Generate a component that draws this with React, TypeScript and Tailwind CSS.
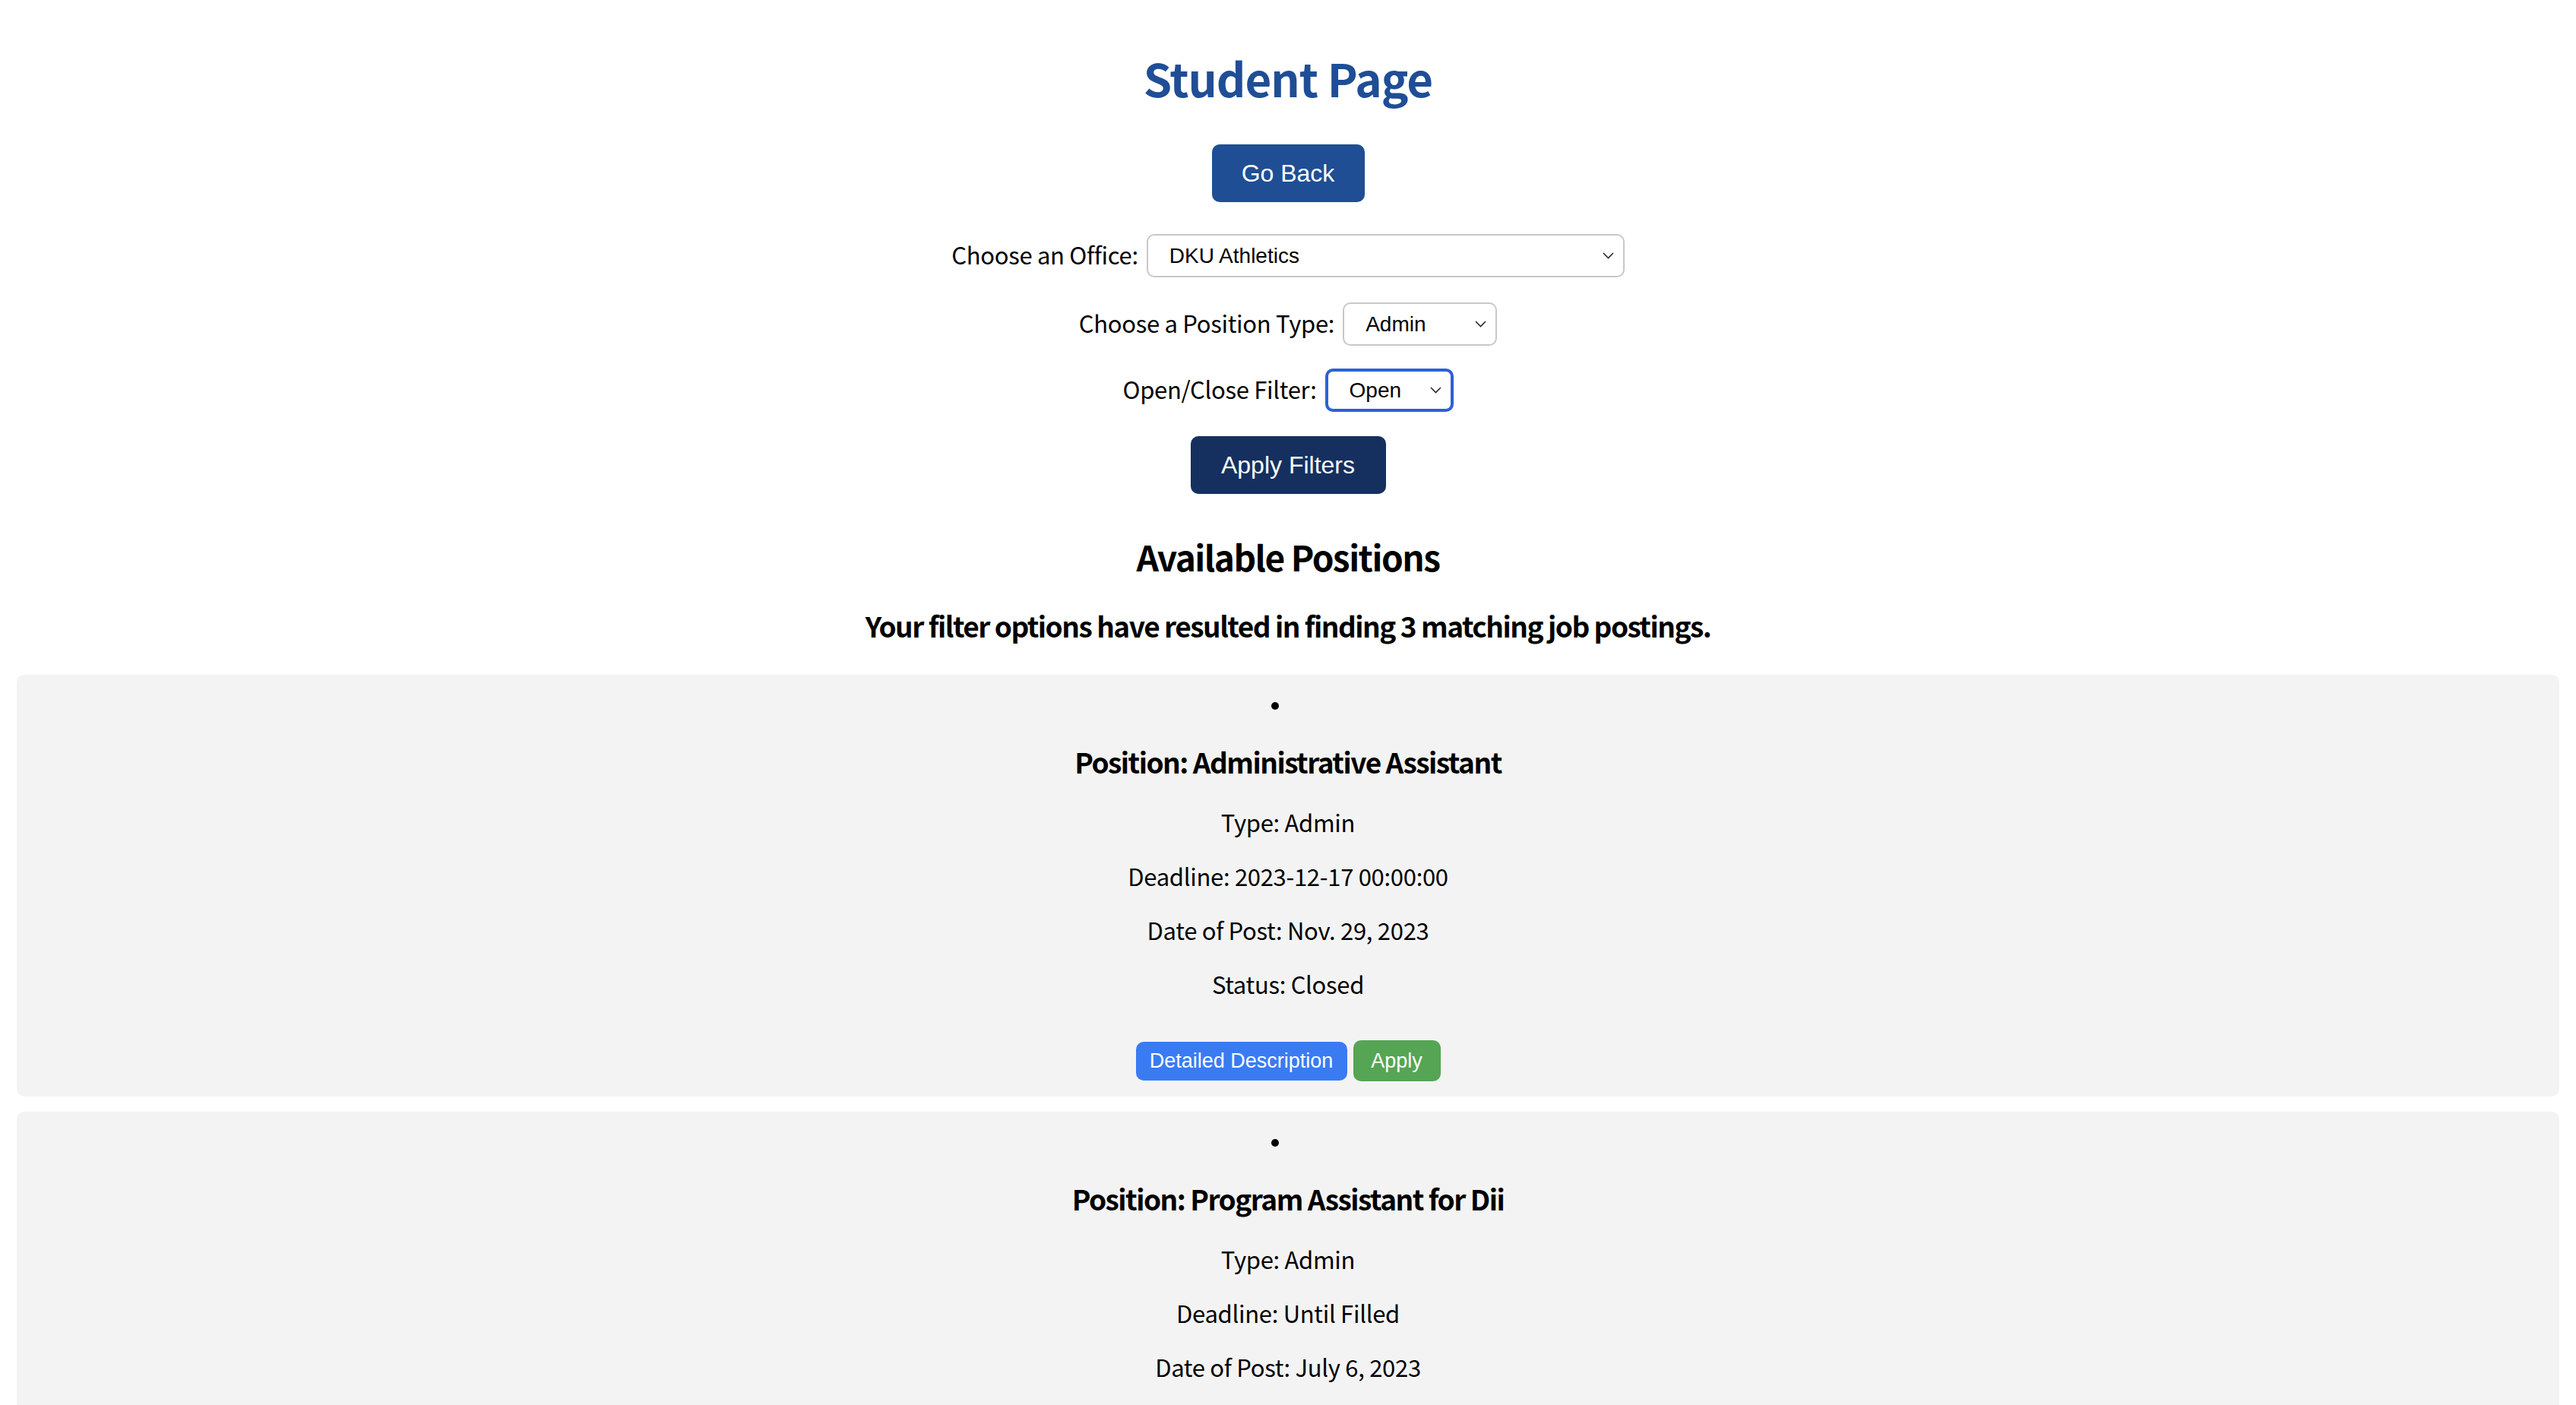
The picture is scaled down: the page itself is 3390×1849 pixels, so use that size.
import React from "react";

type Job = {
  title: string;
  type: string;
  deadline: string;
  posted: string;
  status: string;
};

const jobs: Job[] = [
  {
    title: "Administrative Assistant",
    type: "Admin",
    deadline: "2023-12-17 00:00:00",
    posted: "Nov. 29, 2023",
    status: "Closed",
  },
  {
    title: "Program Assistant for Dii",
    type: "Admin",
    deadline: "Until Filled",
    posted: "July 6, 2023",
    status: "Open",
  },
  {
    title: "Office Assistant",
    type: "Admin",
    deadline: "Until Filled",
    posted: "Sept. 12, 2023",
    status: "Open",
  },
];

const Chevron = () => (
  <svg width="15" height="9" viewBox="0 0 15 9" fill="none">
    <polyline points="1,1 7.5,7.5 14,1" stroke="#2b2b2b" strokeWidth="1.6" />
  </svg>
);

// fake select box, styled like the mac default
const SelectBox = ({
  value,
  width,
  focused,
}: {
  value: string;
  width: string;
  focused?: boolean;
}) => (
  <div
    className={`${width} h-[57px] flex items-center justify-between pl-[28px] pr-[12px] rounded-[10px] bg-white font-['Liberation_Sans',Arial,sans-serif] text-[28px] ${
      focused ? "border-[4px] border-[#2c61d6]" : "border-2 border-[#c8c8c8]"
    }`}
  >
    <span>{value}</span>
    <Chevron />
  </div>
);

const FilterRow = ({ label, children, top }: { label: string; children: React.ReactNode; top: string }) => (
  <div className={`flex items-center gap-[11px] ${top}`}>
    <label className="pb-[4px] text-[31px] leading-[44px] tracking-[-0.3px]">{label}</label>
    {children}
  </div>
);

const Line = ({ children, top }: { children: React.ReactNode; top: string }) => (
  <p className={`${top} text-[31px] leading-[44px] tracking-[-0.3px]`}>{children}</p>
);

const JobCard = ({ job }: { job: Job }) => (
  <li className="list-none mx-[22px] mb-[20px] pt-[21px] pb-[20px] bg-[#f3f3f3] rounded-[10px] flex flex-col items-center text-center">
    <div className="h-[40px] flex items-center">
      <span className="mr-[34px] w-[10px] h-[10px] rounded-full bg-black" />
    </div>
    <h3 className="mt-[28px] text-[37px] leading-[50px] font-bold tracking-[-1.5px]">Position: {job.title}</h3>
    <Line top="mt-[33px]">Type: {job.type}</Line>
    <Line top="mt-[27px]">Deadline: {job.deadline}</Line>
    <Line top="mt-[27px]">Date of Post: {job.posted}</Line>
    <Line top="mt-[27px]">Status: {job.status}</Line>
    <div className="mt-[52px] flex items-center gap-[8px] font-['Liberation_Sans',Arial,sans-serif] text-[27px] text-white">
      <button type="button" className="h-[51px] w-[278px] rounded-[10px] bg-[#3a7bf2]">
        Detailed Description
      </button>
      <button type="button" className="h-[54px] w-[115px] rounded-[10px] bg-[#55a555]">
        Apply
      </button>
    </div>
  </li>
);

export default function App() {
  return (
    <main className="min-h-screen bg-white text-black font-['Noto_Sans_CJK_KR',sans-serif]">
      <div className="flex flex-col items-center pt-[62px]">
        <h1 className="text-[60px] leading-[80px] font-bold tracking-[-1px] text-[#1f4e96]">Student Page</h1>
        <button
          type="button"
          className="mt-[48px] h-[76px] w-[201px] rounded-[10px] bg-[#1f4e94] text-white text-[32px] font-['Liberation_Sans',Arial,sans-serif]"
        >
          Go Back
        </button>

        <FilterRow label="Choose an Office:" top="mt-[42px]">
          <SelectBox value="DKU Athletics" width="w-[629px]" />
        </FilterRow>
        <FilterRow label="Choose a Position Type:" top="mt-[33px]">
          <SelectBox value="Admin" width="w-[203px]" />
        </FilterRow>
        <FilterRow label="Open/Close Filter:" top="mt-[30px]">
          <SelectBox value="Open" width="w-[169px]" focused />
        </FilterRow>

        <button
          type="button"
          className="mt-[32px] h-[76px] w-[257px] rounded-[10px] bg-[#15305f] text-white text-[32px] font-['Liberation_Sans',Arial,sans-serif]"
        >
          Apply Filters
        </button>

        <h2 className="mt-[52px] text-[46px] leading-[60px] font-bold tracking-[-1.5px]">Available Positions</h2>
        <h3 className="mt-[36px] text-[37px] leading-[50px] font-bold tracking-[-1.5px]">
          Your filter options have resulted in finding {jobs.length} matching job postings.
        </h3>
      </div>

      <ul className="mt-[40px]">
        {jobs.map((job) => (
          <JobCard key={job.title} job={job} />
        ))}
      </ul>
    </main>
  );
}
